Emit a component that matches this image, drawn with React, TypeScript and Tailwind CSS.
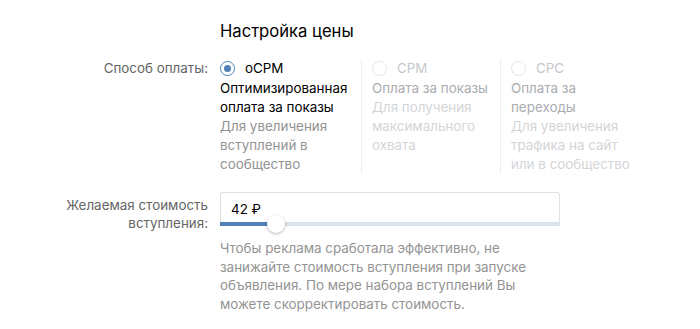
import React from "react";

function Radio({ checked, disabled }: { checked?: boolean; disabled?: boolean }) {
  return (
    <span
      className={
        "inline-flex items-center justify-center w-[15px] h-[15px] rounded-full border shrink-0 " +
        (checked ? "border-[#5181b8]" : disabled ? "border-[#e4e6ea]" : "border-[#c5d0db]")
      }
    >
      {checked && <span className="w-[7px] h-[7px] rounded-full bg-[#5181b8]" />}
    </span>
  );
}

export default function App() {
  return (
    <div
      className="w-[700px] h-[329px] bg-white text-[13.4px] leading-[19px] text-black overflow-hidden"
      style={{ fontFamily: "Inter, Roboto, 'Liberation Sans', sans-serif" }}
    >
      <div className="grid grid-cols-[208px_1fr] gap-x-3 pt-[20px]">
        <div />
        <div className="text-[16.6px] leading-[22px] font-normal text-black">Настройка цены</div>

        <div className="text-right text-[#656565] mt-[17px]">Способ оплаты:</div>
        <div className="flex mt-[17px]">
          <div className="w-[141px] pr-1">
            <div className="flex items-center gap-[10px] h-[19px]">
              <Radio checked />
              <span className="text-black">oCPM</span>
            </div>
            <div className="mt-[1px] text-black">Оптимизированная оплата за показы</div>
            <div className="text-[#939393]">Для увеличения вступлений в сообщество</div>
          </div>
          <div className="w-[139px] border-l border-[#eceef1] pl-[10px] pr-1">
            <div className="flex items-center gap-[10px] h-[19px]">
              <Radio disabled />
              <span className="text-[#c5c8cc]">CPM</span>
            </div>
            <div className="mt-[1px] text-[#a9acb0]">Оплата за показы</div>
            <div className="text-[#d3d5d8]">Для получения максимального охвата</div>
          </div>
          <div className="w-[150px] border-l border-[#eceef1] pl-[10px] pr-2">
            <div className="flex items-center gap-[10px] h-[19px]">
              <Radio disabled />
              <span className="text-[#c5c8cc]">CPC</span>
            </div>
            <div className="mt-[1px] text-[#a9acb0] w-[110px]">Оплата за переходы</div>
            <div className="text-[#d3d5d8] w-[128px]">Для увеличения трафика на сайт или в сообщество</div>
          </div>
        </div>

        <div className="text-right text-[#656565] mt-[18px] pt-[5px] leading-[17.5px]">
          Желаемая стоимость
          <br />
          вступления:
        </div>
        <div className="mt-[18px]">
          <div className="relative w-[340px] h-[34px] border border-[#dce1e6] border-b-0 rounded-t-[3px] rounded-b-[2px] bg-white">
            <div className="pl-[10px] pt-[7px] text-black">42 ₽</div>
            <div className="absolute left-[-1px] right-[-1px] bottom-0 h-[4px] bg-[#dae1e8]">
              <div className="h-full w-[56px] bg-[#5181b8]" />
            </div>
            <div className="absolute left-[46px] bottom-[-7px] w-[18px] h-[18px] rounded-full bg-white shadow-[0_1px_3px_rgba(0,0,0,0.3)]" />
          </div>
          <div className="mt-[13px] w-[330px] text-[#939393] leading-[18.7px]">
            Чтобы реклама сработала эффективно, не занижайте стоимость вступления при запуске
            объявления. По мере набора вступлений Вы можете скорректировать стоимость.
          </div>
        </div>
      </div>
    </div>
  );
}
